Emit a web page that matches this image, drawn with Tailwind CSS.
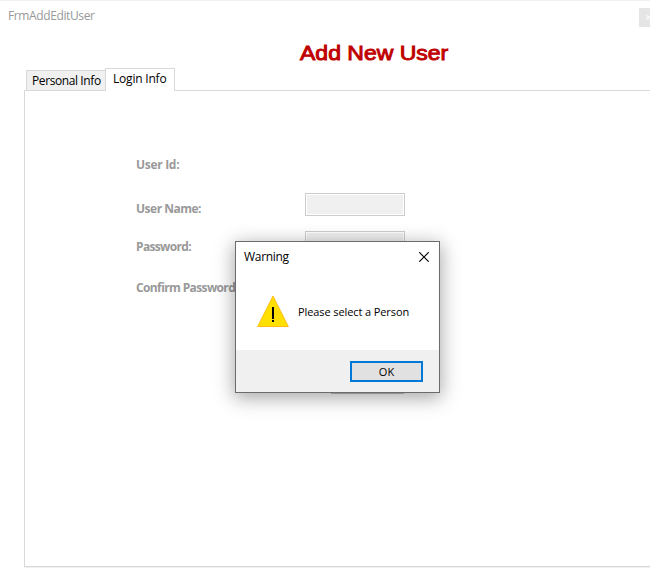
<!DOCTYPE html>
<html lang="en">
<head>
<meta charset="utf-8">
<title>FrmAddEditUser</title>
<script src="https://cdn.jsdelivr.net/npm/@tailwindcss/browser@4"></script>
</head>
<body class="relative h-[569px] w-[650px] overflow-hidden bg-white font-['Open_Sans',sans-serif] text-[12px] leading-4 text-black">
<main class="flex h-full flex-col border-t border-[#f0f0f0]">
  <header class="flex h-[38px] justify-between pl-2 pt-[7px] text-[#999]">
    <span class="text-[12px] tracking-[-0.38px]">FrmAddEditUser</span>
    <span class="flex h-[19px] w-[11px] items-center justify-end bg-[#e5e5e5]">
      <svg class="h-[5px] w-1" viewBox="0 0 4 5" fill="none" stroke="#f7f7f7" stroke-width="1.4"><path d="M0 0L5 5M0 5L5 0"/></svg>
    </span>
  </header>
  <h1 class="h-[28px] pl-[300px] pt-0.5 font-['Liberation_Sans',sans-serif] text-[20px] leading-6 font-normal whitespace-nowrap text-[#c00000]"><span class="inline-block origin-left scale-x-[1.15] [-webkit-text-stroke:0.9px_#c00000]">Add New User</span></h1>
  <nav class="relative z-10 flex h-[24px] items-end pl-[26px]">
    <div class="mb-px flex h-[20px] w-[79px] items-center border border-r-0 border-b-0 border-[#d9d9d9] bg-[#f0f0f0] pl-[5px] tracking-[-0.4px] whitespace-nowrap">Personal Info</div>
    <div class="h-[23px] w-[70px] border border-b-0 border-[#d9d9d9] bg-white pl-[7px] pt-[2px] tracking-[-0.2px] whitespace-nowrap">Login Info</div>
  </nav>
  <section class="-mt-px ml-[24px] h-[477px] border border-r-0 border-[#d9d9d9] pl-[111px] pt-[54px] font-bold tracking-[-0.5px] text-[#999] shadow-[0_1px_0_#f0f0f0]">
    <div class="flex h-[39px] items-center"><span class="w-[169px] tracking-[-0.3px]">User Id:</span></div>
    <div class="mt-[5px] flex h-[39px] items-center">
      <span class="w-[169px]">User Name:</span>
      <div class="mt-[4px] h-[23px] w-[100px] self-start border border-[#ccc] bg-white p-px"><div class="h-full bg-[#f0f0f0]"></div></div>
    </div>
    <div class="flex h-[38px] items-center">
      <span class="w-[169px] tracking-[-0.65px]">Password:</span>
      <div class="mt-[3px] h-[23px] w-[100px] self-start border border-[#ccc] bg-white p-px"><div class="h-full bg-[#f0f0f0]"></div></div>
    </div>
    <div class="mt-[3px] flex h-[38px] items-center"><span class="w-[169px] tracking-[-0.62px] whitespace-nowrap">Confirm Password:</span></div>
    <div class="mt-[63px] ml-[195px] h-[24px] w-[73px] bg-[#bfbfbf]"></div>
  </section>
</main>
<div role="dialog" class="absolute top-[241px] left-[235px] flex h-[152px] w-[205px] flex-col border border-[#6b6b6b] bg-white shadow-[0_4px_18px_1px_rgba(0,0,0,0.35)]">
  <div class="flex h-[30px] items-center justify-between pl-2 pr-[10px]">
    <span class="tracking-[-0.3px]">Warning</span>
    <svg class="h-[10px] w-[10px]" viewBox="0 0 10 10" fill="none" stroke="#000" stroke-width="1.1"><path d="M.2 .2L9.8 9.8M9.8 .2L.2 9.8"/></svg>
  </div>
  <div class="flex h-[78px] pl-[21px] pt-[23px]">
    <svg class="h-8 w-8 shrink-0" viewBox="0 0 32 32"><path d="M16 1L31.3 31.5H.7Z" fill="#ffe000" stroke="#ffbd14" stroke-width="1"/><path d="M15 12h2v12h-2zM15 25h2v2h-2z" fill="#000"/></svg>
    <span class="ml-[9px] mt-[9px] text-[11px] tracking-[-0.1px] whitespace-nowrap">Please select a Person</span>
  </div>
  <div class="flex flex-1 justify-end bg-[#f0f0f0] pr-4 pt-[11px]">
    <button class="flex h-[21px] w-[73px] items-center justify-center border-2 border-[#0078d7] bg-[#e1e1e1] text-[11px]">OK</button>
  </div>
</div>
</body>
</html>
